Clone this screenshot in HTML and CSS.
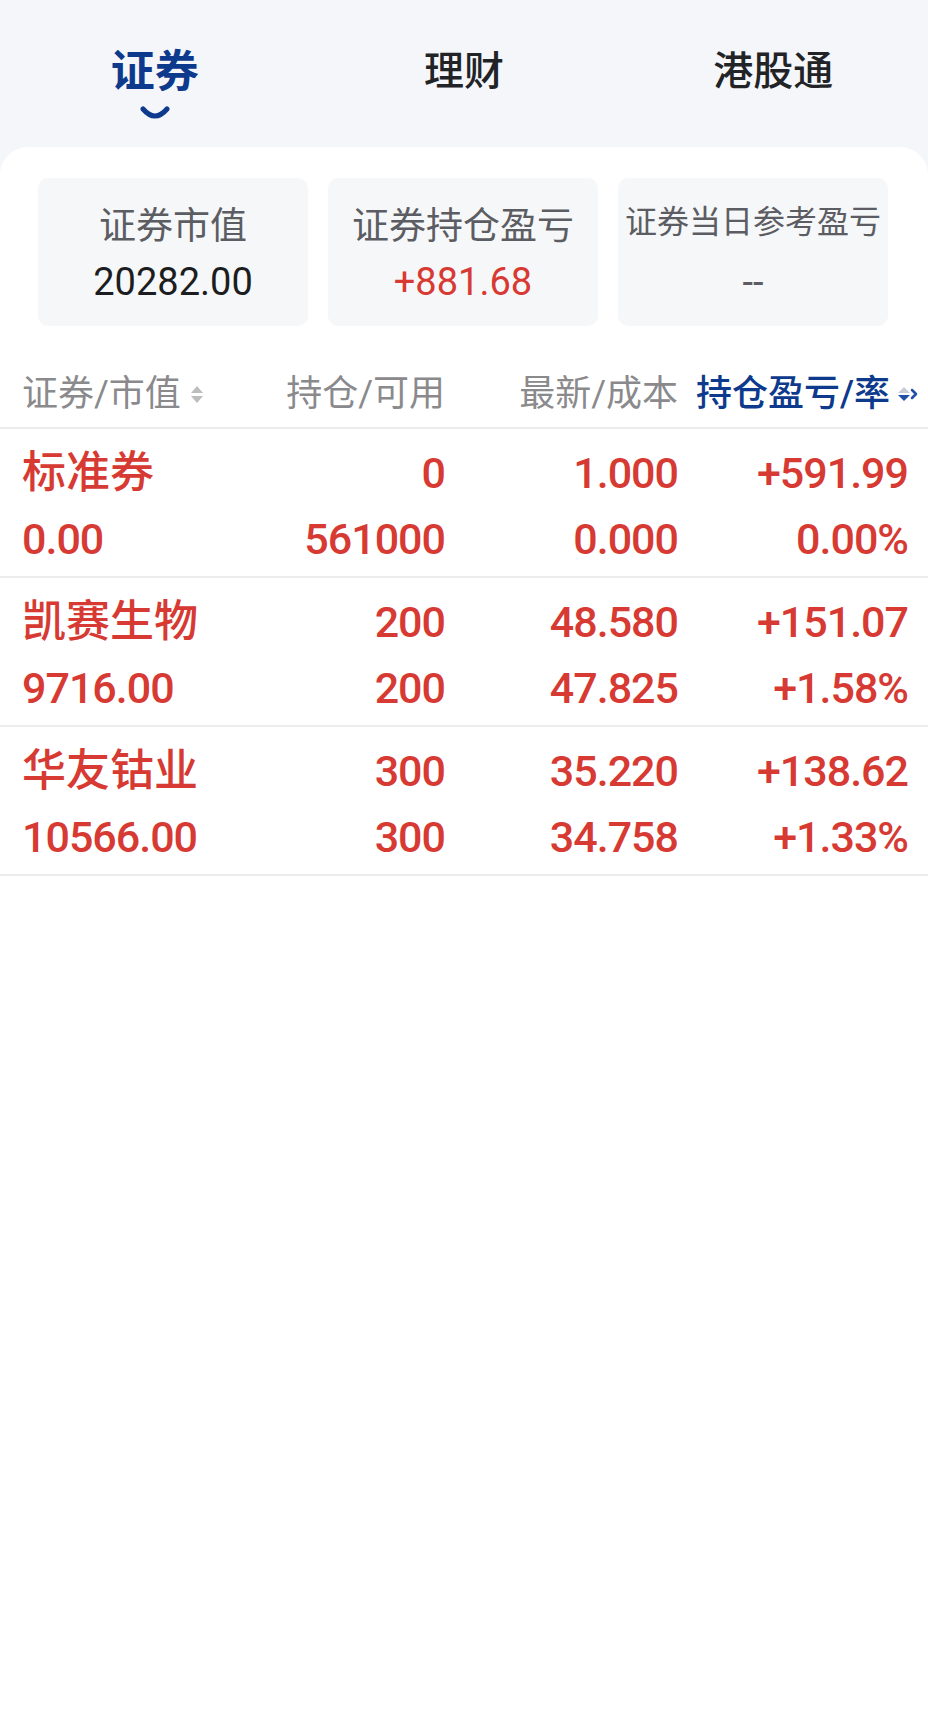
FILE: index.html
```html
<!DOCTYPE html>
<html lang="zh-CN">
<head>
<meta charset="utf-8">
<title>持仓</title>
<link rel="stylesheet" href="styles.css">
</head>
<body>
<div class="page">
  <nav class="tabs">
    <div class="tab active">
      <span class="tab-label">证券</span>
      <svg class="tab-mark" viewBox="0 0 32 14" width="32" height="14"><path d="M4 3 Q16 17 28 3" fill="none" stroke="#0d3a8c" stroke-width="5" stroke-linecap="round"/></svg>
    </div>
    <div class="tab"><span class="tab-label">理财</span></div>
    <div class="tab"><span class="tab-label">港股通</span></div>
  </nav>

  <main class="card">
    <section class="summary">
      <div class="sum-box">
        <div class="sum-label">证券市值</div>
        <div class="sum-value">20282.00</div>
      </div>
      <div class="sum-box">
        <div class="sum-label">证券持仓盈亏</div>
        <div class="sum-value up">+881.68</div>
      </div>
      <div class="sum-box">
        <div class="sum-label small">证券当日参考盈亏</div>
        <div class="sum-value muted">--</div>
      </div>
    </section>

    <div class="thead">
      <div class="th th-left">证券/市值
        <svg class="sort" viewBox="0 0 12 17" width="12" height="17"><polygon points="0,7 6,0 12,7" fill="#bdbdbd"/><polygon points="0,10 12,10 6,17" fill="#bdbdbd"/></svg>
      </div>
      <div class="th">持仓/可用</div>
      <div class="th">最新/成本</div>
      <div class="th th-active">持仓盈亏/率
        <svg class="sort-active" viewBox="0 0 22 18" width="22" height="18"><polygon points="2,8 8,2 14,8" fill="#c9ccd4"/><polygon points="2,10 14,10 8,16" fill="#1f4fa6"/><path d="M16 5 L20 9 L16 13" fill="none" stroke="#1f4fa6" stroke-width="2.5" stroke-linejoin="round" stroke-linecap="round"/></svg>
      </div>
    </div>

    <div class="row">
      <div class="c name">标准券</div>
      <div class="c num">0</div>
      <div class="c num">1.000</div>
      <div class="c num">+591.99</div>
      <div class="c num-left">0.00</div>
      <div class="c num">561000</div>
      <div class="c num">0.000</div>
      <div class="c num">0.00%</div>
    </div>
    <div class="row">
      <div class="c name">凯赛生物</div>
      <div class="c num">200</div>
      <div class="c num">48.580</div>
      <div class="c num">+151.07</div>
      <div class="c num-left">9716.00</div>
      <div class="c num">200</div>
      <div class="c num">47.825</div>
      <div class="c num">+1.58%</div>
    </div>
    <div class="row">
      <div class="c name">华友钴业</div>
      <div class="c num">300</div>
      <div class="c num">35.220</div>
      <div class="c num">+138.62</div>
      <div class="c num-left">10566.00</div>
      <div class="c num">300</div>
      <div class="c num">34.758</div>
      <div class="c num">+1.33%</div>
    </div>
  </main>
</div>
</body>
</html>
```

FILE: styles.css
```css
html, body {
  margin: 0;
  padding: 0;
}
body {
  font-family: Roboto, "Noto Sans CJK SC", sans-serif;
  background: #ffffff;
  color: #222;
}
.page {
  background: #f4f6fa;
  min-height: 100vh;
  display: flex;
  flex-direction: column;
}
.tabs {
  display: grid;
  grid-template-columns: repeat(3, 1fr);
  padding-top: 43px;
  height: 104px;
}
.tab {
  display: flex;
  flex-direction: column;
  align-items: center;
}
.tab-label {
  font-size: 40px;
  line-height: 58px;
  font-weight: 500;
  color: #222326;
}
.tab.active .tab-label {
  font-size: 44px;
  font-weight: 700;
  color: #0d3a8c;
}
.tab-mark {
  margin-top: 5px;
  display: block;
}
.card {
  flex: 1;
  background: #ffffff;
  border-radius: 28px 28px 0 0;
}
.summary {
  display: grid;
  grid-template-columns: repeat(3, 1fr);
  gap: 20px;
  padding: 31px 40px 0 38px;
}
.sum-box {
  background: #f6f7f9;
  border-radius: 10px;
  height: 148px;
  display: flex;
  flex-direction: column;
  align-items: center;
}
.sum-label {
  font-size: 37px;
  line-height: 48px;
  margin-top: 25px;
  color: #5c5d62;
  white-space: nowrap;
}
.sum-label.small {
  font-size: 32px;
  margin-top: 20px;
  margin-bottom: 5px;
}
.sum-value {
  font-size: 38px;
  line-height: 52px;
  margin-top: 5px;
  color: #1c1d20;
}
.sum-value.up {
  color: #d83a33;
}
.sum-value.muted {
  color: #5c5d62;
}
.thead {
  display: grid;
  grid-template-columns: 228px 195px 233px 1fr;
  padding: 0 10px 0 22px;
  margin-top: 33px;
  height: 70px;
  border-bottom: 2px solid #ececec;
  box-sizing: border-box;
  align-items: center;
}
.th {
  font-size: 36px;
  line-height: 70px;
  color: #8a8a8d;
  text-align: right;
  white-space: nowrap;
}
.th-left {
  text-align: left;
  display: flex;
  align-items: center;
  gap: 10px;
}
.th-active {
  color: #0d3a8c;
  font-weight: 500;
  display: flex;
  justify-content: flex-end;
  align-items: center;
  gap: 6px;
}
.sort, .sort-active {
  display: block;
}
.row {
  display: grid;
  grid-template-columns: 228px 195px 233px 1fr;
  padding: 11px 20px 4px 22px;
  border-bottom: 2px solid #ececec;
}
.c {
  line-height: 66px;
  color: #d63a33;
  white-space: nowrap;
}
.name {
  font-size: 44px;
  font-weight: 500;
}
.num, .num-left {
  font-size: 43px;
  font-weight: 500;
  letter-spacing: -1px;
}
.num {
  text-align: right;
}
```
